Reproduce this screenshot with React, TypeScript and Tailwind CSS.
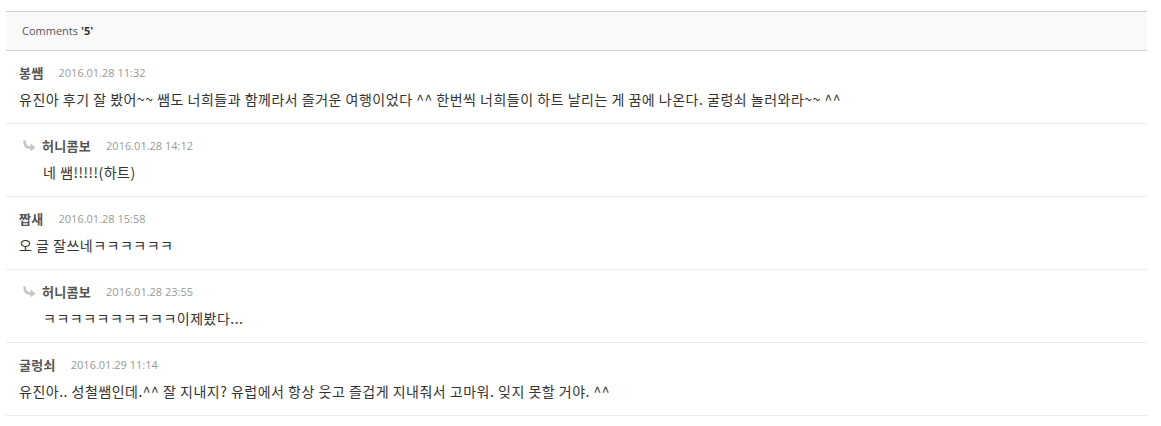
const comments = [
  {
    id: 1,
    name: '봉쌤',
    date: '2016.01.28 11:32',
    body: '유진아 후기 잘 봤어~~ 쌤도 너희들과 함께라서 즐거운 여행이었다 ^^ 한번씩 너희들이 하트 날리는 게 꿈에 나온다. 굴렁쇠 놀러와라~~ ^^',
    reply: false,
  },
  { id: 2, name: '허니콤보', date: '2016.01.28 14:12', body: '네 쌤!!!!!(하트)', reply: true },
  { id: 3, name: '짭새', date: '2016.01.28 15:58', body: '오 글 잘쓰네ㅋㅋㅋㅋㅋㅋ', reply: false },
  { id: 4, name: '허니콤보', date: '2016.01.28 23:55', body: 'ㅋㅋㅋㅋㅋㅋㅋㅋㅋㅋ이제봤다...', reply: true },
  {
    id: 5,
    name: '굴렁쇠',
    date: '2016.01.29 11:14',
    body: '유진아.. 성철쌤인데.^^ 잘 지내지? 유럽에서 항상 웃고 즐겁게 지내줘서 고마워. 잊지 못할 거야. ^^',
    reply: false,
  },
];

function ReplyArrow() {
  return (
    <svg width="14" height="12" viewBox="0 0 14 12" className="mr-[6px] shrink-0">
      <path d="M2.5 0.5 C2.5 5 3.5 7.5 7.5 7.5 L9.5 7.5" fill="none" stroke="#c4c4c4" strokeWidth="2.6" />
      <path d="M8.5 3.5 L13.5 7.5 L8.5 11.5 Z" fill="#c4c4c4" />
    </svg>
  );
}

export default function App() {
  return (
    <div className="bg-white w-[1161px] h-[426px] pt-[11px] pl-[6px] font-['Open_Sans','Noto_Sans_CJK_KR',sans-serif]">
      <div className="w-[1141px]">
        <div className="h-[40px] bg-[#f9f9f9] border-y border-[#cfcfcf] flex items-center pl-[16px] text-[11px] text-[#555]">
          Comments <span className="font-bold text-[#333] ml-[3px]">'5'</span>
        </div>
        {comments.map((c) => (
          <div key={c.id} className="h-[73px] border-b border-[#ebebeb] pt-[13px] flex flex-col">
            <div className={`flex items-center h-[18px] ${c.reply ? 'pl-[16px]' : 'pl-[13px]'}`}>
              {c.reply && <ReplyArrow />}
              <span className="text-[13px] font-bold text-[#555] tracking-[0.3px] font-['Noto_Sans_CJK_KR',sans-serif]">{c.name}</span>
              <span className="text-[11px] text-[#999] ml-[15px]">{c.date}</span>
            </div>
            <p className={`mt-[7px] h-[20px] leading-[20px] text-[14px] tracking-[0.5px] text-[#333] font-['Noto_Sans_CJK_KR',sans-serif] ${c.reply ? 'pl-[37px]' : 'pl-[13px]'}`}>
              {c.body}
            </p>
          </div>
        ))}
      </div>
    </div>
  );
}
